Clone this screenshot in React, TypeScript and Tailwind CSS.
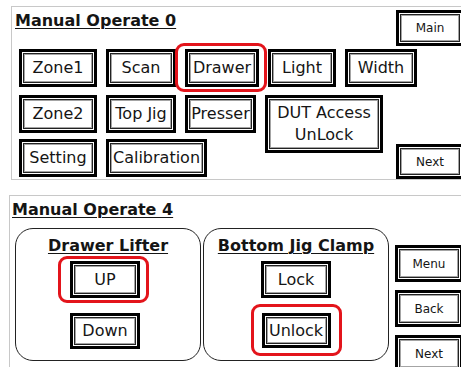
import clsx from 'clsx';

type BtnProps = {
  label: React.ReactNode;
  className?: string;
  small?: boolean;
  mark?: string; // red highlight box, inset classes
};

const Btn = ({ label, className, small, mark }: BtnProps) => (
  <div className={clsx('relative shrink-0', className)}>
    <div className="h-full w-full border-[3px] border-black bg-white p-px">
      <div
        className={clsx(
          'flex h-full w-full items-center justify-center border border-[#222] text-center text-[#151515] shadow-[inset_0_0_0_1px_#a4a4a4]',
          small ? 'text-[12px]' : 'text-[16px] leading-[22px]'
        )}
      >
        {label}
      </div>
    </div>
    {mark && <div className={clsx('pointer-events-none absolute rounded-[9px] border-[3px] border-[#e3141b]', mark)} />}
  </div>
);

const Group = ({ title, children }: { title: string; children: React.ReactNode }) => (
  <div className="flex h-[133px] w-[186px] flex-col items-center rounded-[18px] border border-[#222] pt-[7px]">
    <div className="h-[20px] text-[16px] font-bold leading-[20px] text-[#151515] underline decoration-1 underline-offset-2">
      {title}
    </div>
    {children}
  </div>
);

export default function App() {
  return (
    <div className="relative h-[367px] w-[461px] overflow-hidden bg-white font-['DejaVu_Sans',sans-serif]">
      {/* Manual Operate 0 */}
      <div className="ml-[11px] mt-[6px] flex h-[174px] w-[460px] border-y border-l border-[#c8c8c8]">
        <div className="flex w-[384px] flex-col">
          <div className="ml-[3px] mt-[4px] h-[20px] text-[16px] font-bold leading-[20px] text-[#151515] underline decoration-1 underline-offset-2">
            Manual Operate 0
          </div>
          <div className="ml-[7px] mt-[18px] flex h-[38px] gap-[9px]">
            <Btn label="Zone1" className="w-[78px]" />
            <Btn label="Scan" className="w-[70px]" />
            <Btn label="Drawer" className="w-[74px]" mark="-left-[10px] -right-[8px] -top-[6px] -bottom-[5px]" />
            <Btn label="Light" className="w-[68px]" />
            <Btn label="Width" className="w-[72px]" />
          </div>
          <div className="ml-[7px] mt-[8px] flex h-[38px] items-start gap-[9px]">
            <Btn label="Zone2" className="h-[38px] w-[78px]" />
            <Btn label="Top Jig" className="h-[38px] w-[70px]" />
            <Btn label="Presser" className="h-[38px] w-[71px]" />
            <Btn label={<span>DUT Access<br />UnLock</span>} className="h-[58px] w-[118px]" />
          </div>
          <div className="ml-[7px] mt-[6px] flex h-[38px] gap-[9px]">
            <Btn label="Setting" className="w-[78px]" />
            <Btn label="Calibration" className="w-[101px]" />
          </div>
        </div>
        <div className="flex flex-col justify-between pt-[3px]">
          <Btn label="Main" small className="h-[36px] w-[68px]" />
          <Btn label="Next" small className="h-[35px] w-[68px]" />
        </div>
      </div>

      {/* Manual Operate 4 */}
      <div className="ml-[9px] mt-[15px] h-[200px] w-[460px] border-l border-t border-[#c8c8c8]">
        <div className="ml-[2px] mt-[4px] h-[20px] text-[16px] font-bold leading-[20px] text-[#151515] underline decoration-1 underline-offset-2">
          Manual Operate 4
        </div>
        <div className="ml-[5px] mt-[8px] flex">
          <Group title="Drawer Lifter">
            <Btn label="UP" className="mr-[6px] mt-[5px] h-[37px] w-[70px]" mark="-left-[12px] -right-[9px] -top-[5px] -bottom-[5px]" />
            <Btn label="Down" className="mr-[6px] mt-[15px] h-[36px] w-[70px]" />
          </Group>
          <div className="ml-[2px]">
            <Group title="Bottom Jig Clamp">
              <Btn label="Lock" className="mt-[5px] h-[37px] w-[70px]" />
              <Btn label="Unlock" className="mt-[15px] h-[35px] w-[69px]" mark="-left-[11px] -right-[11px] -top-[9px] -bottom-[8px]" />
            </Group>
          </div>
          <div className="ml-[6px] mt-[17px] flex flex-col gap-[8px]">
            <Btn label="Menu" small className="h-[37px] w-[68px]" />
            <Btn label="Back" small className="h-[37px] w-[68px]" />
            <Btn label="Next" small className="h-[37px] w-[68px]" />
          </div>
        </div>
      </div>
    </div>
  );
}
